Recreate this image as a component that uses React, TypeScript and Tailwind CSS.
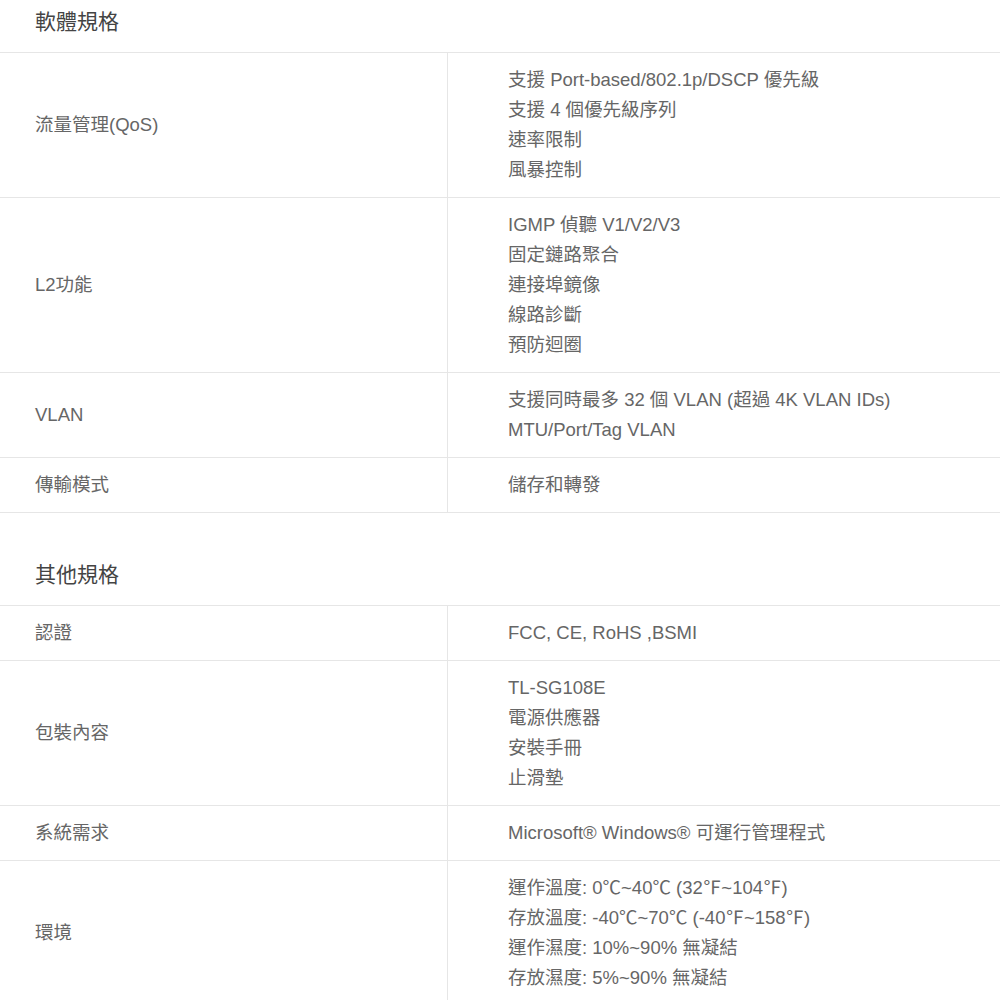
const font = {
  fontFamily: '"Liberation Sans", Arial, "Noto Sans CJK TC", sans-serif',
};

type Row = { label: string; values: string[] };

const software: Row[] = [
  {
    label: "流量管理(QoS)",
    values: [
      "支援 Port-based/802.1p/DSCP 優先級",
      "支援 4 個優先級序列",
      "速率限制",
      "風暴控制",
    ],
  },
  {
    label: "L2功能",
    values: ["IGMP 偵聽 V1/V2/V3", "固定鏈路聚合", "連接埠鏡像", "線路診斷", "預防迴圈"],
  },
  {
    label: "VLAN",
    values: ["支援同時最多 32 個 VLAN (超過 4K VLAN IDs)", "MTU/Port/Tag VLAN"],
  },
  { label: "傳輸模式", values: ["儲存和轉發"] },
];

const other: Row[] = [
  { label: "認證", values: ["FCC, CE, RoHS ,BSMI"] },
  { label: "包裝內容", values: ["TL-SG108E", "電源供應器", "安裝手冊", "止滑墊"] },
  { label: "系統需求", values: ["Microsoft® Windows® 可運行管理程式"] },
  {
    label: "環境",
    values: [
      "運作溫度: 0℃~40℃ (32℉~104℉)",
      "存放溫度: -40℃~70℃ (-40℉~158℉)",
      "運作濕度: 10%~90% 無凝結",
      "存放濕度: 5%~90% 無凝結",
    ],
  },
];

function Section({ title, rows }: { title: string; rows: Row[] }) {
  return (
    <div>
      <h2 className="pl-[35px] pt-[7px] pb-[15px] text-[21px] leading-[30px] text-[#444]">{title}</h2>
      <div className="border-t border-[#e6e6e6]">
        {rows.map((r) => (
          <div key={r.label} className="grid grid-cols-[448px_1fr] border-b border-[#e6e6e6]">
            <div className="flex items-center border-r border-[#e6e6e6] pl-[35px] text-[18.5px] leading-[30px] text-[#666]">
              {r.label}
            </div>
            <div className="py-3 pl-[60px] text-[18.5px] leading-[30px] text-[#666]">
              {r.values.map((v) => (
                <div key={v}>{v}</div>
              ))}
            </div>
          </div>
        ))}
      </div>
    </div>
  );
}

export default function App() {
  return (
    <div className="w-[1000px] h-[1000px] overflow-hidden bg-white" style={font}>
      <Section title="軟體規格" rows={software} />
      <div className="mt-[40px]">
        <Section title="其他規格" rows={other} />
      </div>
    </div>
  );
}
